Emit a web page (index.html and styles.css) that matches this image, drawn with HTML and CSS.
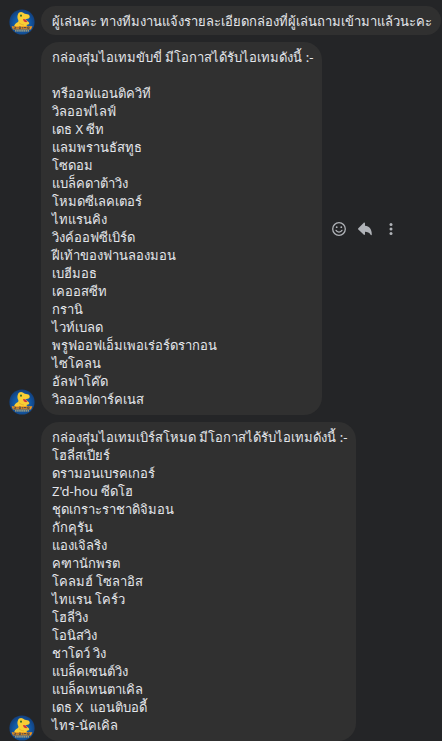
FILE: index.html
```html
<!DOCTYPE html>
<html lang="th">
<head>
    <meta charset="UTF-8">
    <meta name="viewport" content="width=device-width, initial-scale=1.0">
    <title>Chat</title>
    <link rel="stylesheet" href="styles.css">
</head>
<body>
    <!-- Shared avatar drawing -->
    <svg class="defs" width="0" height="0" aria-hidden="true">
        <defs>
            <radialGradient id="sky" cx="50%" cy="55%" r="55%">
                <stop offset="0" stop-color="#1b76c4"/>
                <stop offset="0.6" stop-color="#1258a4"/>
                <stop offset="1" stop-color="#123d79"/>
            </radialGradient>
        </defs>
        <symbol id="avatar" viewBox="0 0 26 26">
            <circle cx="13" cy="13" r="12.6" fill="url(#sky)"/>
            <path d="M9 5.2 C9.6 2.8 12.5 2.3 14.2 3.7 L15.8 4.8 L19.5 5.4 C21.2 6.2 21 8.8 19.6 9.5 L16.4 10.2 L20 13.4 C20.8 14.6 19.6 15.8 17.8 15.7 L17.6 18.5 H5 C5 16 6.4 14.2 9 13 C9.6 12.2 9.6 11.5 9 10.4 C8.2 8.8 8.3 6.6 9 5.2 Z" fill="#f8cd35"/>
            <path d="M14 10 L16.2 10.2 L18.4 12.8 C17.4 13.4 15.4 13.2 14.6 12 Z" fill="#cf3040"/>
            <path d="M10 13.8 C11.4 15 12.8 15.7 15 16" fill="none" stroke="#dba022" stroke-width="0.6"/>
            <ellipse cx="12" cy="6.6" rx="0.9" ry="1.2" fill="#24652f"/>
            <path d="M2.6 17.3 L23.4 17.3 L22 20.4 L4 20.4 Z" fill="#f0941e"/>
            <path d="M4.5 18 h2 v1.6 h-2 M8 18 v1.7 M10 18 h1.8 v1.6 H10 Z M13.4 18 v1.7 M15 19.7 V18 l1 1 1 -1 v1.7 M18.6 18 h1.6 v1.6 h-1.6 Z" fill="none" stroke="#283b5c" stroke-width="0.7"/>
            <path d="M6 21.8 H20" stroke="#c5ad72" stroke-width="1.2" stroke-dasharray="1.6 0.5"/>
        </symbol>
    </svg>

    <main class="chat">
        <div class="message">
            <svg class="avatar" role="img" aria-label="Digimon"><use href="#avatar"/></svg>
            <p class="bubble">ผู้เล่นคะ ทางทีมงานแจ้งรายละเอียดกล่องที่ผู้เล่นถามเข้ามาแล้วนะคะ</p>
        </div>

        <div class="message">
            <svg class="avatar" role="img" aria-label="Digimon"><use href="#avatar"/></svg>
            <p class="bubble long">กล่องสุ่มไอเทมขับขี่ มีโอกาสได้รับไอเทมดังนี้ :-<br>
                <br>
                ทรีออฟแอนติควิที<br>
                วิลออฟไลฟ์<br>
                เดธ X ซีท<br>
                แลมพรานธัสทูธ<br>
                โซดอม<br>
                แบล็คดาต้าวิง<br>
                โหมดซีเลคเตอร์<br>
                ไทแรนคิง<br>
                วิงค์ออฟซีเบิร์ด<br>
                ฝีเท้าของฟานลองมอน<br>
                เบฮีมอธ<br>
                เคออสซีท<br>
                กรานิ<br>
                ไวท์เบลด<br>
                พรูฟออฟเอ็มเพอเร่อร์ดรากอน<br>
                ไซโคลน<br>
                อัลฟาโค๊ด<br>
                วิลออฟดาร์คเนส</p>
            <div class="actions">
                <button type="button" aria-label="React">
                    <svg width="16" height="16" viewBox="0 0 16 16" fill="none" stroke="#b0b3b8">
                        <circle cx="8" cy="8" r="6.3" stroke-width="1.3"/>
                        <path d="M5 9.3 C6 11.6 10 11.6 11 9.3" stroke-width="1.3" stroke-linecap="round"/>
                        <circle cx="5.7" cy="6.2" r="0.9" fill="#b0b3b8" stroke="none"/>
                        <circle cx="10.3" cy="6.2" r="0.9" fill="#b0b3b8" stroke="none"/>
                    </svg>
                </button>
                <button type="button" aria-label="Reply">
                    <svg width="16" height="16" viewBox="0 0 16 16" fill="#b0b3b8">
                        <path d="M1.3 7.2 L6.6 1.9 C7.2 1.3 8 1.7 8 2.5 V4.8 C12.5 5.2 14.8 8.3 14.8 13.4 C14.8 14.3 14 14.4 13.6 13.7 C12.3 11.6 10.6 10.9 8 10.8 V13 C8 13.8 7.2 14.2 6.6 13.6 L1.3 8.6 C0.9 8.2 0.9 7.6 1.3 7.2 Z"/>
                    </svg>
                </button>
                <button type="button" aria-label="More">
                    <svg width="16" height="16" viewBox="0 0 16 16" fill="#b0b3b8">
                        <circle cx="8" cy="3.6" r="1.5"/>
                        <circle cx="8" cy="8" r="1.5"/>
                        <circle cx="8" cy="12.4" r="1.5"/>
                    </svg>
                </button>
            </div>
        </div>

        <div class="message">
            <svg class="avatar" role="img" aria-label="Digimon"><use href="#avatar"/></svg>
            <p class="bubble long">กล่องสุ่มไอเทมเบิร์สโหมด มีโอกาสได้รับไอเทมดังนี้ :-<br>
                โฮลี่สเปียร์<br>
                ดรามอนเบรคเกอร์<br>
                Z'd-hou ซีดโฮ<br>
                ชุดเกราะราชาดิจิมอน<br>
                กักคุรัน<br>
                แองเจิลริง<br>
                คฑานักพรต<br>
                โคลมฮ์ โซลาอิส<br>
                ไทแรน โคร์ว<br>
                โฮลี่วิง<br>
                โอนิสวิง<br>
                ชาโดว์ วิง<br>
                แบล็คเซนต์วิง<br>
                แบล็คเทนตาเคิล<br>
                เดธ X&nbsp; แอนติบอดี้<br>
                ไทร-นัคเคิล</p>
        </div>
    </main>
</body>
</html>
```

FILE: styles.css
```css
body {
    margin: 0;
    background-color: #242527;
    color: #e4e6eb;
    font-family: "Noto Sans", "Open Sans", sans-serif;
    font-size: 13px;
    line-height: 18px;
}
.defs {
    position: absolute;
}
.chat {
    display: flex;
    flex-direction: column;
    gap: 7px;
    padding-top: 6px;
}
.message {
    display: flex;
    align-items: flex-end;
    padding-left: 9px;
}
.avatar {
    flex: none;
    width: 26px;
    height: 26px;
    margin-right: 6px;
}
.bubble {
    margin: 0;
    padding: 6px 9px 5px 11px;
    border-radius: 18px;
    background-color: #303030;
    white-space: nowrap;
}
.bubble.long {
    padding-bottom: 7px;
}
.actions {
    display: flex;
    align-self: center;
    gap: 2px;
    margin-left: 5px;
}
.actions button {
    display: flex;
    align-items: center;
    justify-content: center;
    width: 24px;
    height: 24px;
    padding: 0;
    border: none;
    border-radius: 50%;
    background: none;
    cursor: pointer;
}
.actions button:hover {
    background-color: #3a3b3c;
}
```
